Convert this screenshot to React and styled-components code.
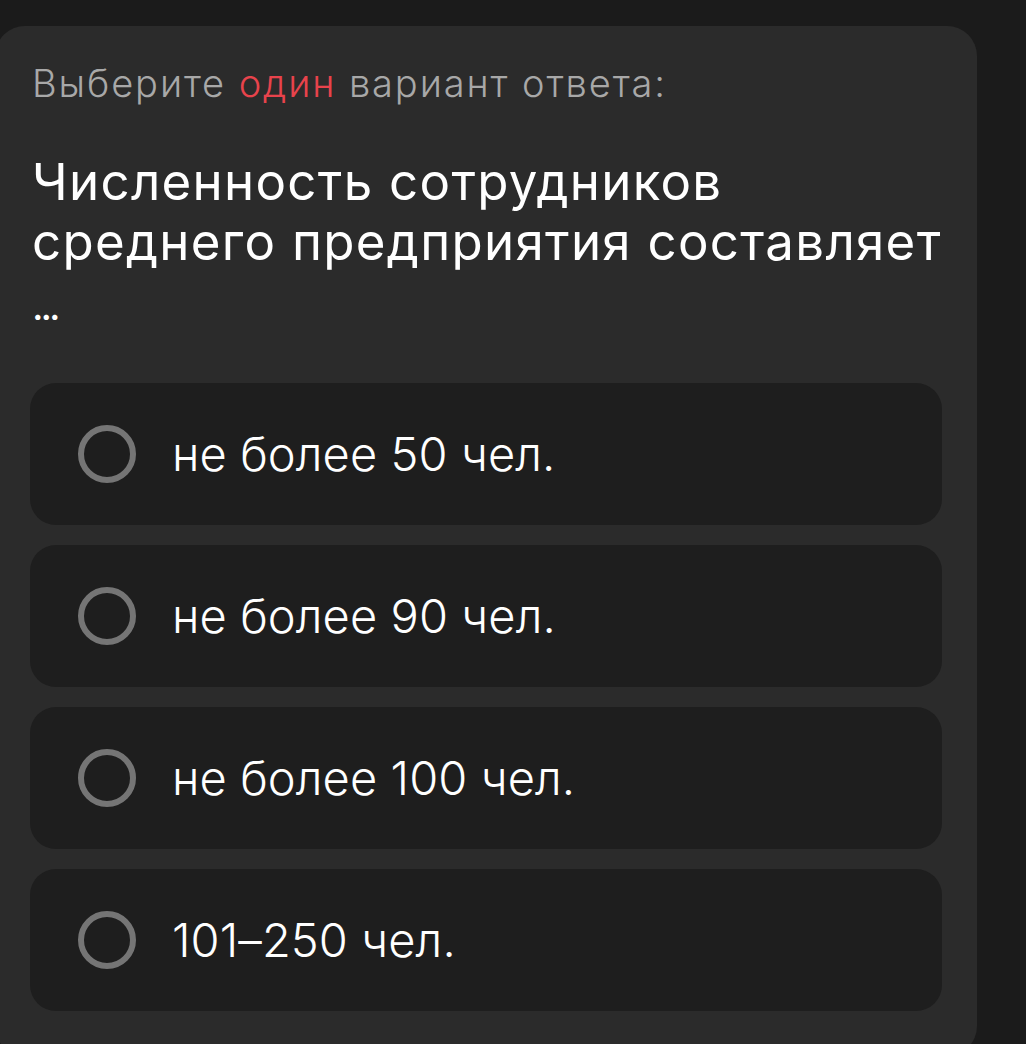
import React from "react";
import styled, { createGlobalStyle } from "styled-components";

const Global = createGlobalStyle`
  html, body { margin: 0; padding: 0; background: #1b1b1b; }
  body { font-family: Inter, "Noto Sans", sans-serif; overflow: hidden; }
`;

const Page = styled.div`
  height: 1044px;
  padding-top: 26px;
  box-sizing: border-box;
  overflow: hidden;
`;

const Card = styled.div`
  margin-left: -5px;
  width: 982px;
  box-sizing: border-box;
  background: #2b2b2b;
  border-radius: 30px;
  padding: 33px 35px 40px 37px;
  min-height: 1030px;
`;

const Prompt = styled.div`
  color: #a8a8a8;
  font-size: 38px;
  line-height: 48px;
  font-weight: 300;
  letter-spacing: 1.9px;
`;

const Accent = styled.span`
  color: #e8434c;
`;

const Question = styled.div`
  margin-top: 45px;
  color: #ffffff;
  font-size: 51px;
  line-height: 60px;
  font-weight: 400;
  letter-spacing: 1.3px;
`;

const Ellipsis = styled.span`
  font-size: 40px;
  line-height: 40px;
  letter-spacing: -3px;
`;

const Options = styled.div`
  margin-top: 51px;
  margin-left: -2px;
  display: flex;
  flex-direction: column;
  gap: 20px;
`;

const Option = styled.div`
  height: 142px;
  box-sizing: border-box;
  background: #1e1e1e;
  border-radius: 26px;
  display: flex;
  align-items: center;
  padding-left: 48px;
  gap: 36px;
`;

const Radio = styled.span`
  width: 58px;
  height: 58px;
  box-sizing: border-box;
  border-radius: 50%;
  border: 6px solid #757575;
  flex-shrink: 0;
`;

const Label = styled.span`
  color: #ffffff;
  font-size: 47px;
  line-height: 56px;
  font-weight: 300;
  letter-spacing: 0.1px;
`;

const answers = ["не более 50 чел.", "не более 90 чел.", "не более 100 чел.", "101–250 чел."];

export default function App() {
  return (
    <Page>
      <Global />
      <Card>
        <Prompt>
          Выберите <Accent>один</Accent> вариант ответа:
        </Prompt>
        <Question>
          Численность сотрудников
          <br />
          среднего предприятия составляет
          <br />
          <Ellipsis>...</Ellipsis>
        </Question>
        <Options>
          {answers.map((a) => (
            <Option key={a}>
              <Radio />
              <Label>{a}</Label>
            </Option>
          ))}
        </Options>
      </Card>
    </Page>
  );
}
